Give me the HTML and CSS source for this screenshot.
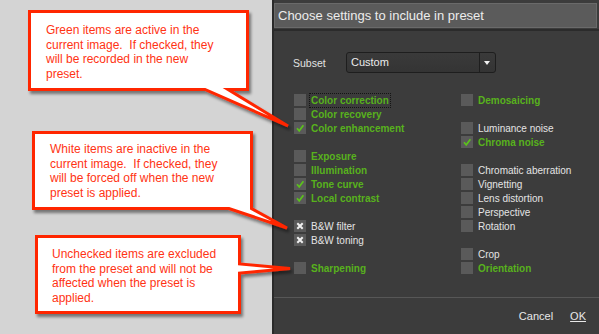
FILE: index.html
```html
<!DOCTYPE html>
<html lang="en">
<head>
  <meta charset="UTF-8" />
  <title>Choose settings to include in preset</title>
  <link rel="stylesheet" href="styles.css">
</head>
<body>
<div class="page">
  <div class="notes"></div>

  <div class="dialog">
    <div class="dialog-head">
      <div class="dialog-title">Choose settings to include in preset</div>
    </div>

    <div class="dialog-body">
      <div class="subset-row">
        <span class="subset-label">Subset</span>
        <div class="select">
          <span class="select-value">Custom</span>
          <span class="select-arrow"></span>
        </div>
      </div>

      <div class="settings">
        <div class="col">
          <div class="item active"><span class="box"></span><span class="label focused">Color correction</span></div>
          <div class="item active"><span class="box"></span><span class="label">Color recovery</span></div>
          <div class="item active"><span class="box"><svg viewBox="0 0 12 12"><path class="tick" d="M3 6.3 L5.2 8.8 L9.4 3.2"/></svg></span><span class="label">Color enhancement</span></div>
          <div class="gap"></div>
          <div class="item active"><span class="box"></span><span class="label">Exposure</span></div>
          <div class="item active"><span class="box"></span><span class="label">Illumination</span></div>
          <div class="item active"><span class="box"><svg viewBox="0 0 12 12"><path class="tick" d="M3 6.3 L5.2 8.8 L9.4 3.2"/></svg></span><span class="label">Tone curve</span></div>
          <div class="item active"><span class="box"><svg viewBox="0 0 12 12"><path class="tick" d="M3 6.3 L5.2 8.8 L9.4 3.2"/></svg></span><span class="label">Local contrast</span></div>
          <div class="gap"></div>
          <div class="item"><span class="box"><svg viewBox="0 0 12 12"><path class="cross" d="M3.3 3.3 L8.7 8.7 M8.7 3.3 L3.3 8.7"/></svg></span><span class="label">B&amp;W filter</span></div>
          <div class="item"><span class="box"><svg viewBox="0 0 12 12"><path class="cross" d="M3.3 3.3 L8.7 8.7 M8.7 3.3 L3.3 8.7"/></svg></span><span class="label">B&amp;W toning</span></div>
          <div class="gap"></div>
          <div class="item active"><span class="box"></span><span class="label">Sharpening</span></div>
        </div>

        <div class="col col-right">
          <div class="item active"><span class="box"></span><span class="label">Demosaicing</span></div>
          <div class="gap"></div>
          <div class="item"><span class="box"></span><span class="label">Luminance noise</span></div>
          <div class="item active"><span class="box"><svg viewBox="0 0 12 12"><path class="tick" d="M3 6.3 L5.2 8.8 L9.4 3.2"/></svg></span><span class="label">Chroma noise</span></div>
          <div class="gap"></div>
          <div class="item"><span class="box"></span><span class="label">Chromatic aberration</span></div>
          <div class="item"><span class="box"></span><span class="label">Vignetting</span></div>
          <div class="item"><span class="box"></span><span class="label">Lens distortion</span></div>
          <div class="item"><span class="box"></span><span class="label">Perspective</span></div>
          <div class="item"><span class="box"></span><span class="label">Rotation</span></div>
          <div class="gap"></div>
          <div class="item"><span class="box"></span><span class="label">Crop</span></div>
          <div class="item active"><span class="box"></span><span class="label">Orientation</span></div>
        </div>
      </div>
    </div>

    <div class="dialog-footer">
      <span class="btn">Cancel</span>
      <span class="btn ok">OK</span>
    </div>
  </div>

  <!-- callout shapes, drawn over both the margin and the dialog edge -->
  <svg class="callouts" width="599" height="334" viewBox="0 0 599 334">
    <defs>
      <filter id="shadow" x="-10%" y="-10%" width="130%" height="140%">
        <feDropShadow dx="2" dy="3" stdDeviation="1.6" flood-color="#000" flood-opacity="0.45"/>
      </filter>
    </defs>
    <path class="bubble" d="M29.5 11.5 H247.5 V89.5 H228 L288 126 L205 89.5 H29.5 Z"/>
    <path class="bubble" d="M33.5 132.5 H251.5 V208.5 L287 228 L229 208.5 H33.5 Z"/>
    <path class="bubble" d="M36.5 236.5 H239.5 V264 L290 268.5 L239.5 273 V312.5 H36.5 Z"/>
  </svg>

  <div class="note note-1">Green items are active in the<br>current image.&nbsp; If checked, they<br>will be recorded in the new<br>preset.</div>
  <div class="note note-2">White items are inactive in the<br>current image.&nbsp; If checked, they<br>will be forced off when the new<br>preset is applied.</div>
  <div class="note note-3">Unchecked items are excluded<br>from the preset and will not be<br>affected when the preset is<br>applied.</div>
</div>
</body>
</html>
```

FILE: styles.css
```css
body {
  margin: 0;
  background: #d4d4d4;
  font-family: "Liberation Sans", Arial, sans-serif;
}

.page {
  position: relative;
  display: flex;
  width: 599px;
  height: 334px;
  overflow: hidden;
}

.notes {
  flex: none;
  width: 272px;
}

/* dialog */

.dialog {
  flex: 1;
  min-width: 0;
  display: flex;
  flex-direction: column;
  background: #3c3c3c;
  border-left: 2px solid #2a2a2a;
}

.dialog-head {
  padding: 3px 2px 1px 0;
  border-bottom: 2px solid #2b2b2b;
}

.dialog-title {
  box-sizing: border-box;
  height: 25px;
  padding-left: 3px;
  border: 1px solid #6a6a6a;
  background: #5b5b5b;
  color: #ececec;
  font-size: 13px;
  line-height: 23px;
}

.dialog-body {
  padding: 21px 0 0 19px;
}

.subset-row {
  display: flex;
  align-items: center;
  height: 21px;
}

.subset-label {
  width: 53px;
  color: #e2e2e2;
  font-size: 10.5px;
}

.select {
  box-sizing: border-box;
  display: flex;
  width: 150px;
  height: 21px;
  border: 1px solid #1e1e1e;
  border-radius: 3px;
  background: linear-gradient(#3a3a3a, #343434);
}

.select-value {
  flex: 1;
  padding-left: 4px;
  color: #ececec;
  font-size: 11px;
  line-height: 19px;
}

.select-arrow {
  position: relative;
  width: 15px;
  border-left: 1px solid #1e1e1e;
}

.select-arrow::after {
  content: "";
  position: absolute;
  left: 4px;
  top: 8px;
  border-left: 3.5px solid transparent;
  border-right: 3.5px solid transparent;
  border-top: 4px solid #f2f2f2;
}

.settings {
  display: flex;
  margin-top: 20px;
  padding-left: 1px;
}

.col {
  width: 167px;
}

.col-right {
  flex: 1;
  width: auto;
}

.item,
.gap {
  height: 14px;
}

.item {
  display: flex;
  align-items: center;
  gap: 5px;
  color: #e4e4e4;
  font-size: 10px;
  white-space: nowrap;
}

.item.active {
  color: #58b21c;
  font-weight: bold;
}

.box {
  flex: none;
  width: 12px;
  height: 12px;
  background: #5a5a5a;
}

.box svg {
  display: block;
  width: 12px;
  height: 12px;
}

.tick {
  fill: none;
  stroke: #5cc21c;
  stroke-width: 1.7;
}

.cross {
  fill: none;
  stroke: #f0f0f0;
  stroke-width: 2;
}

.label.focused {
  outline: 1px dotted #141414;
  outline-offset: 1px;
}

.dialog-footer {
  box-sizing: border-box;
  display: flex;
  justify-content: flex-end;
  align-items: center;
  gap: 17px;
  height: 37px;
  margin-top: auto;
  padding: 0 13px 0 0;
  border-top: 1px solid #575757;
}

.btn {
  color: #e8e8e8;
  font-size: 11px;
}

.btn.ok {
  text-decoration: underline;
}

/* callouts */

.callouts {
  position: absolute;
  left: 0;
  top: 0;
  pointer-events: none;
}

.bubble {
  fill: #fff;
  stroke: #ff2600;
  stroke-width: 3;
  filter: url(#shadow);
}

.note {
  position: absolute;
  color: #ff3314;
  font-size: 12px;
  line-height: 14.7px;
}

.note-1 {
  left: 46px;
  top: 23px;
}

.note-2 {
  left: 50px;
  top: 142px;
}

.note-3 {
  left: 52px;
  top: 247px;
}
```
